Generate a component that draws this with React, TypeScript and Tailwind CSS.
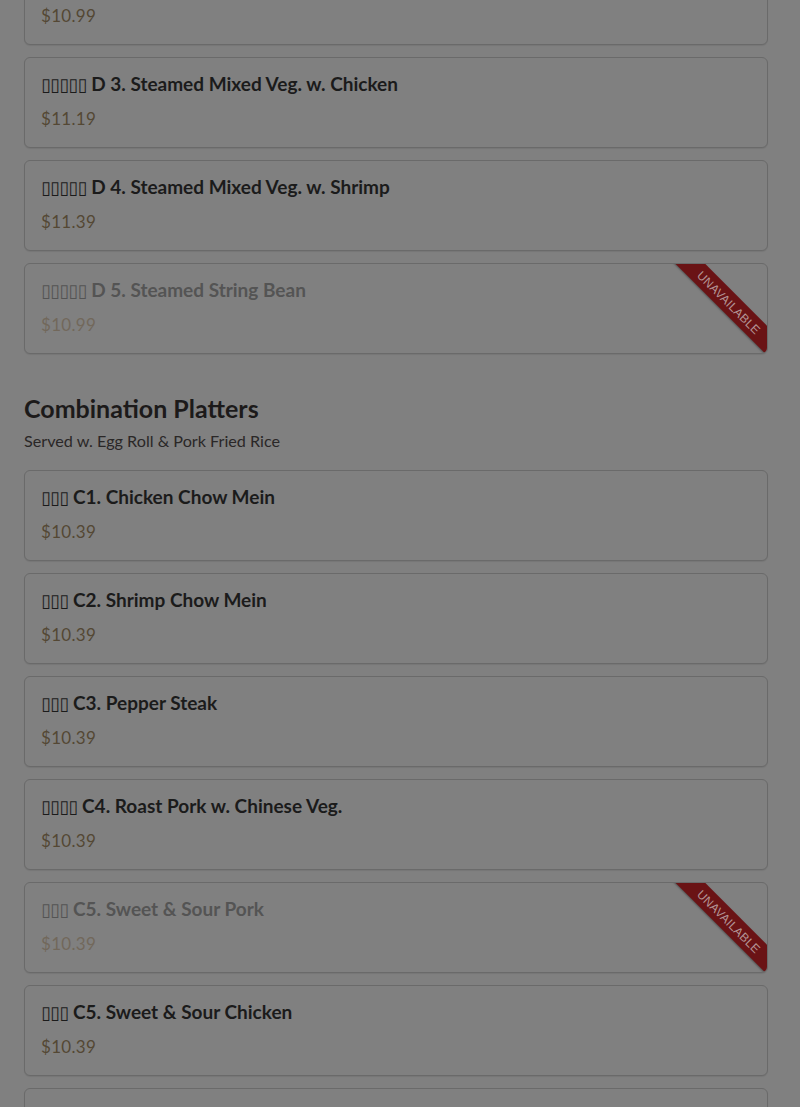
import React from 'react';

interface Dish {
  code: string;
  name: string;
  price: string;
  boxes: number;
  unavailable?: boolean;
}

const vegetables: Dish[] = [
  { code: 'D 2.', name: 'Steamed Broccoli w. Chicken', price: '$10.99', boxes: 5 },
  { code: 'D 3.', name: 'Steamed Mixed Veg. w. Chicken', price: '$11.19', boxes: 5 },
  { code: 'D 4.', name: 'Steamed Mixed Veg. w. Shrimp', price: '$11.39', boxes: 5 },
  { code: 'D 5.', name: 'Steamed String Bean', price: '$10.99', boxes: 5, unavailable: true },
];

const platters: Dish[] = [
  { code: 'C1.', name: 'Chicken Chow Mein', price: '$10.39', boxes: 3 },
  { code: 'C2.', name: 'Shrimp Chow Mein', price: '$10.39', boxes: 3 },
  { code: 'C3.', name: 'Pepper Steak', price: '$10.39', boxes: 3 },
  { code: 'C4.', name: 'Roast Pork w. Chinese Veg.', price: '$10.39', boxes: 4 },
  { code: 'C5.', name: 'Sweet & Sour Pork', price: '$10.39', boxes: 3, unavailable: true },
  { code: 'C5.', name: 'Sweet & Sour Chicken', price: '$10.39', boxes: 3 },
  { code: 'C6.', name: 'Broccoli w. Chicken', price: '$10.39', boxes: 3 },
];

const Ribbon: React.FC = () => (
  <div className="absolute top-[28px] right-[-37px] w-[150px] h-[21px] rotate-45 bg-[#6a1315] shadow-[0_1px_2px_rgba(0,0,0,0.35)] flex items-center justify-center">
    <span className="text-[12px] leading-none tracking-[0.3px] text-[#b39596] font-['Liberation_Sans',sans-serif]">
      UNAVAILABLE
    </span>
  </div>
);

const DishCard: React.FC<{ dish: Dish }> = ({ dish }) => (
  <div className="relative overflow-hidden rounded-md border border-[#6a6a6a] bg-[#808080] px-4 pt-[14px] pb-[16px] shadow-[0_1px_1px_rgba(0,0,0,0.08)]">
    <div
      className={`h-6 text-[19px] leading-6 font-bold ${dish.unavailable ? 'text-[#545454]' : 'text-[#1b1b1b]'}`}
    >
      <span className="font-['DejaVu_Sans',sans-serif] font-normal text-[18px] leading-none tracking-[-0.8px]">
        {'▯'.repeat(dish.boxes)}
      </span>{' '}
      {dish.code} {dish.name}
    </div>
    <div className={`mt-[11px] h-6 text-[17px] leading-6 tracking-[0.3px] ${dish.unavailable ? 'text-[#72685b]' : 'text-[#544834]'}`}>
      {dish.price}
    </div>
    {dish.unavailable && <Ribbon />}
  </div>
);

export default function App() {
  return (
    <div className="min-h-[1107px] bg-[#808080] overflow-hidden font-['Lato','Noto_Sans',sans-serif]">
      <div className="pl-6 pr-8 -mt-[46px]">
        <div className="flex flex-col gap-3">
          {vegetables.map((d, i) => (
            <DishCard key={i} dish={d} />
          ))}
        </div>

        <div className="mt-[38px]">
          <h2 className="text-[25px] leading-8 font-bold text-[#1c1a1a] mb-[5px]">Combination Platters</h2>
          <p className="text-[16.2px] leading-6 text-[#2a2727]">Served w. Egg Roll &amp; Pork Fried Rice</p>
        </div>

        <div className="mt-[17px] flex flex-col gap-3">
          {platters.map((d, i) => (
            <DishCard key={i} dish={d} />
          ))}
        </div>
      </div>
    </div>
  );
}
